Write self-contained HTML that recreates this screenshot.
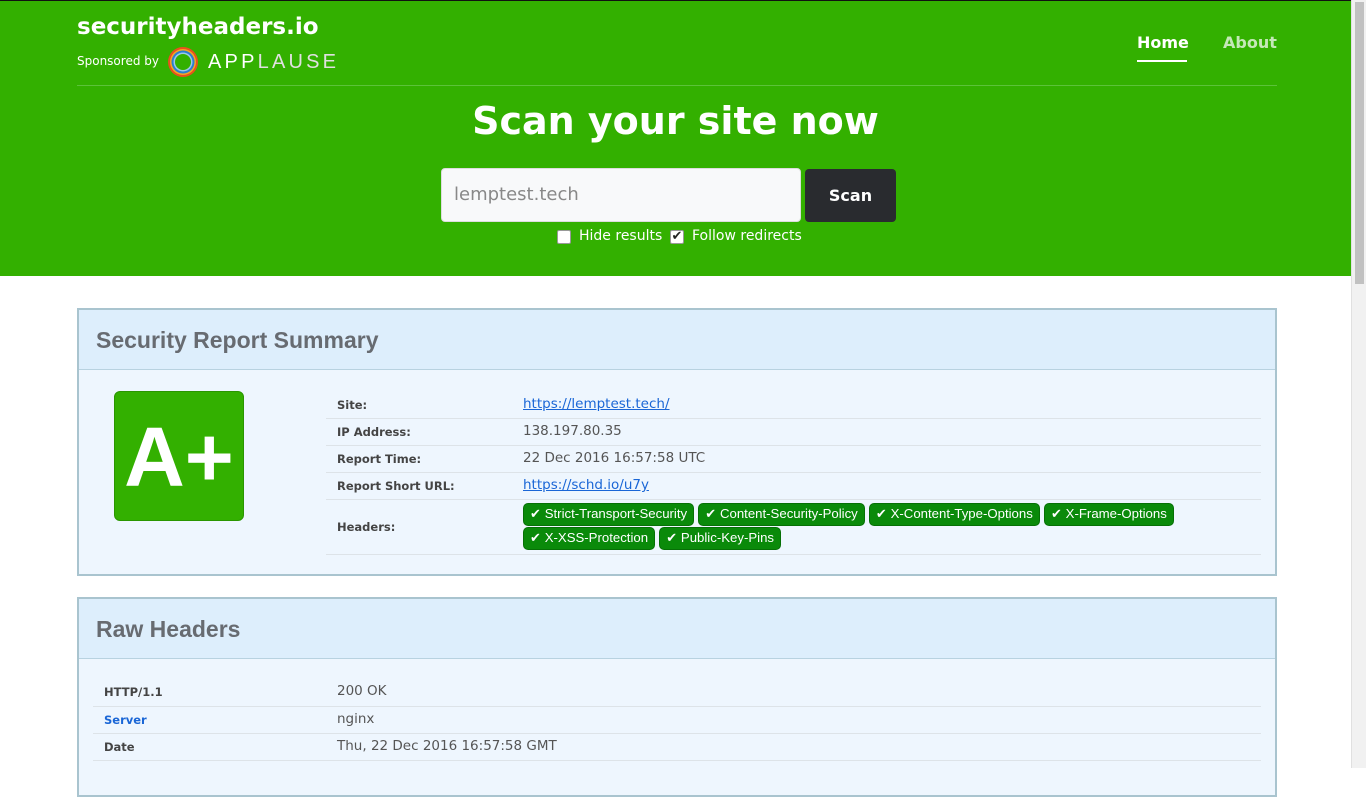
<!DOCTYPE html>
<html><head><meta charset="utf-8"><style>
*{margin:0;padding:0;box-sizing:border-box}
body{width:1366px;height:768px;overflow:hidden;background:#fff;font-family:"DejaVu Sans","Liberation Sans",sans-serif;position:relative}
.a{position:absolute;white-space:nowrap}
.hdr{position:absolute;left:0;top:0;width:1351px;height:276px;background:#33b000;border-top:1px solid #111}
.sb{position:absolute;left:1351px;top:0;width:15px;height:768px;background:#f1f1f1;border-left:1px solid #e0e0e0}
.sb div{position:absolute;left:3px;top:2px;width:9px;height:282px;background:#c1c1c1}
.card{position:absolute;left:77px;width:1200px;border:2px solid #a9c4cf;background:#eef6fe}
.card h2{height:60px;background:#ddeefc;border-bottom:1px solid #b8d2e0;font:bold 23px "Liberation Sans",sans-serif;color:#676b71;padding:17px 0 0 17px}
.row{position:absolute;border-bottom:1px solid #dde3e8;font:13.5px "DejaVu Sans",sans-serif;color:#555}
.k{position:absolute;font-weight:bold;color:#444;font-size:11.5px;margin-top:1px}
.v{position:absolute}
a{color:#1a66d6;text-decoration:underline}
.badge{display:inline-block;background:#0a8a0a;color:#fff;border-radius:5px;padding:2px 6px 3px 6px;font:13.2px "Liberation Sans",sans-serif;border:1px solid #067006}
</style></head><body>
<div class="hdr">
<div class="a" style="left:77px;top:13px;font-size:23px;font-weight:bold;color:#fff">securityheaders.io</div>
<div class="a" style="left:77px;top:53px;font-size:12px;color:#fff">Sponsored by</div>
<svg class="a" style="left:166px;top:44px" width="34" height="34"><circle cx="17" cy="17" r="15" fill="#e8501e"/><circle cx="17" cy="17" r="13" fill="#f5a623"/><circle cx="17" cy="17" r="11.5" fill="#2a7fd0"/><circle cx="17" cy="17" r="9.5" fill="#9cc8e8"/><circle cx="17" cy="17" r="8" fill="#33b000"/></svg>
<div class="a" style="left:208px;top:50px;font:20px 'Liberation Sans',sans-serif;letter-spacing:3.2px;color:#fff">APP<span style="color:#e0e0e0">LAUSE</span></div>
<div class="a" style="left:1137px;top:32px;font-size:16px;font-weight:bold;color:#fff">Home</div>
<div class="a" style="left:1137px;top:59px;width:50px;height:2px;background:#fff"></div>
<div class="a" style="left:1223px;top:32px;font-size:16px;font-weight:bold;color:#c5e8b8">About</div>
<div class="a" style="left:77px;top:84px;width:1200px;height:1px;background:#5cc23a"></div>
<div class="a" style="left:0;width:1351px;text-align:center;top:98px;font-size:38px;font-weight:bold;color:#fff">Scan your site now</div>
<div class="a" style="left:441px;top:167px;width:360px;height:54px;background:#f8f9fa;border-radius:4px;border:1px solid #ddd;font-size:18px;color:#888;padding:15px 0 0 12px">lemptest.tech</div>
<div class="a" style="left:805px;top:168px;width:91px;height:53px;background:#292b2f;border-radius:4px;color:#fff;font-size:16px;font-weight:bold;text-align:center;padding-top:17px">Scan</div>
<div class="a" style="left:557px;top:229px;width:14px;height:14px;background:#fff;border:1px solid #999;border-radius:2px"></div>
<div class="a" style="left:579px;top:227px;font-size:14px;color:#fff">Hide results</div>
<div class="a" style="left:670px;top:229px;width:14px;height:14px;background:#fff;border:1px solid #999;border-radius:2px;font-size:13px;line-height:12px;color:#222;text-align:center">✔</div>
<div class="a" style="left:692px;top:227px;font-size:14px;color:#fff">Follow redirects</div>
</div>
<div class="sb"><div></div></div>

<div class="card" style="top:308px;height:268px"><h2>Security Report Summary</h2>
<div class="a" style="left:35px;top:81px;width:130px;height:130px;background:#33b000;border:1px solid #2a9600;border-radius:6px;color:#fff;font:bold 84px 'Liberation Sans',sans-serif;text-align:center;line-height:130px">A+</div>
<div class="row" style="left:247px;top:81px;width:935px;height:28px"><span class="k" style="left:11px;top:6px">Site:</span><span class="v" style="left:197px;top:5px"><a>https://lemptest.tech/</a></span></div>
<div class="row" style="left:247px;top:109px;width:935px;height:27px"><span class="k" style="left:11px;top:5px">IP Address:</span><span class="v" style="left:197px;top:4px">138.197.80.35</span></div>
<div class="row" style="left:247px;top:136px;width:935px;height:27px"><span class="k" style="left:11px;top:5px">Report Time:</span><span class="v" style="left:197px;top:4px">22 Dec 2016 16:57:58 UTC</span></div>
<div class="row" style="left:247px;top:163px;width:935px;height:27px"><span class="k" style="left:11px;top:5px">Report Short URL:</span><span class="v" style="left:197px;top:4px"><a>https://schd.io/u7y</a></span></div>
<div class="row" style="left:247px;top:190px;width:935px;height:55px"><span class="k" style="left:11px;top:19px">Headers:</span>
<div class="v" style="left:197px;top:3px;width:700px;line-height:24px;white-space:normal;font-size:13px"><span class="badge">✔ Strict-Transport-Security</span> <span class="badge">✔ Content-Security-Policy</span> <span class="badge">✔ X-Content-Type-Options</span> <span class="badge">✔ X-Frame-Options</span> <span class="badge">✔ X-XSS-Protection</span> <span class="badge">✔ Public-Key-Pins</span></div></div>
</div>

<div class="card" style="top:597px;height:200px"><h2>Raw Headers</h2>
<div class="row" style="left:14px;top:80px;width:1168px;height:28px"><span class="k" style="left:11px;top:5px">HTTP/1.1</span><span class="v" style="left:244px;top:4px">200 OK</span></div>
<div class="row" style="left:14px;top:108px;width:1168px;height:27px"><span class="k" style="left:11px;top:5px;color:#1a66d6">Server</span><span class="v" style="left:244px;top:4px">nginx</span></div>
<div class="row" style="left:14px;top:135px;width:1168px;height:27px"><span class="k" style="left:11px;top:5px">Date</span><span class="v" style="left:244px;top:4px">Thu, 22 Dec 2016 16:57:58 GMT</span></div>
</div>
</body></html>
